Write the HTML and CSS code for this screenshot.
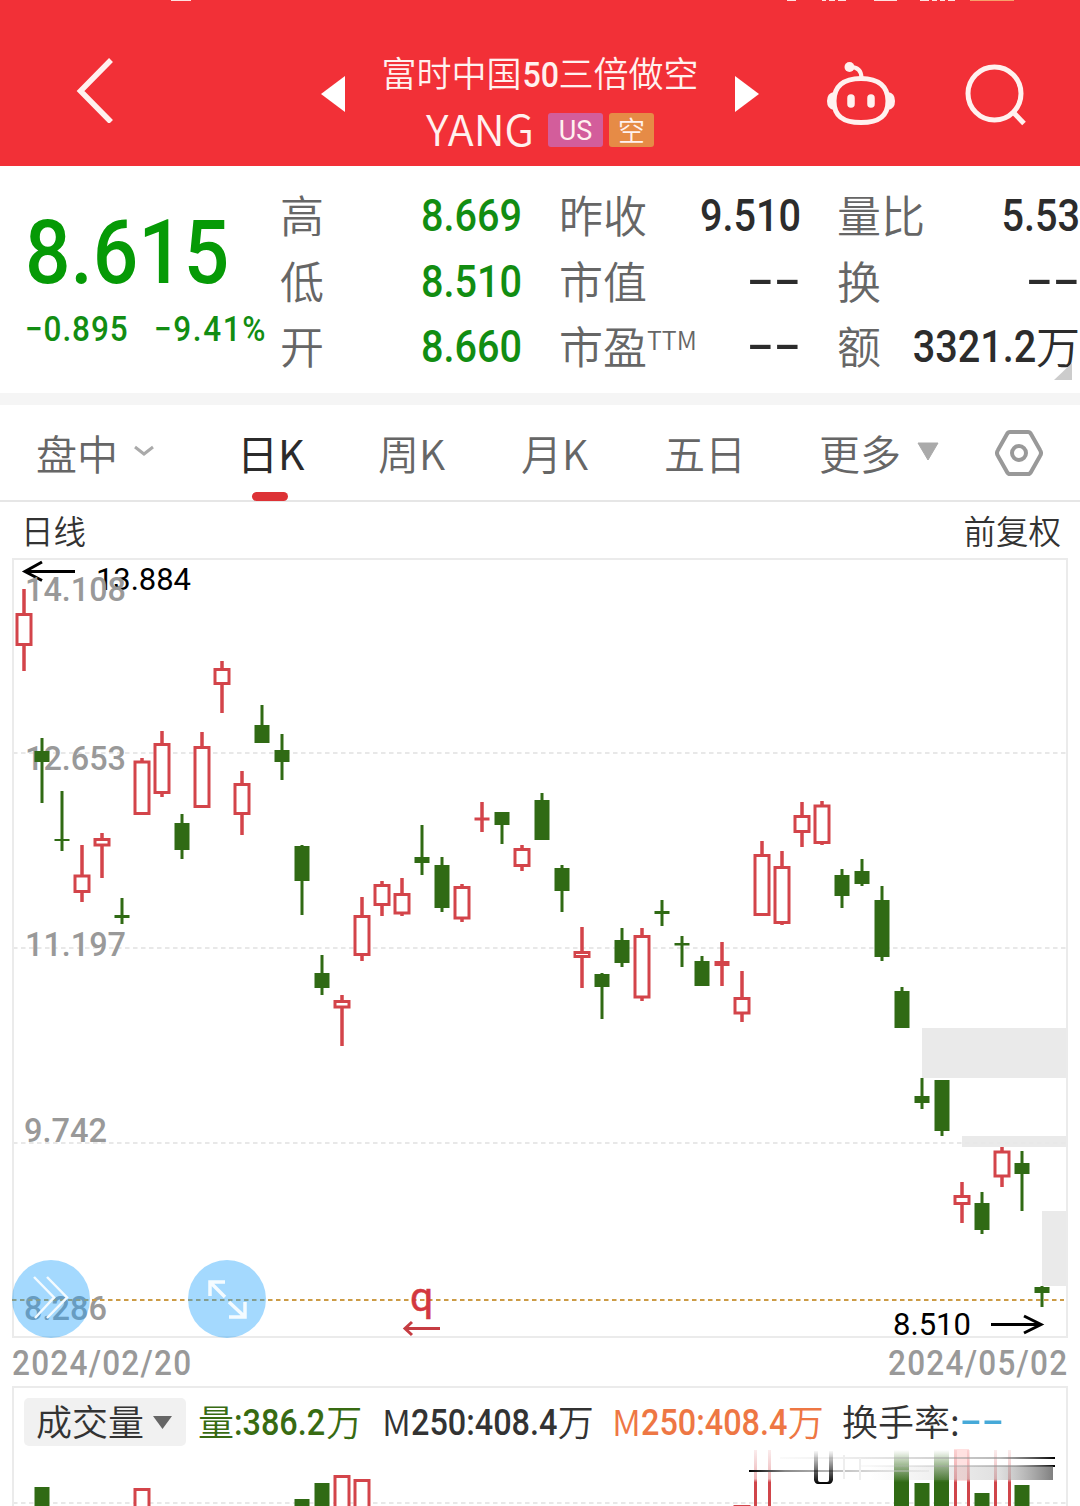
FILE: index.html
```html
<!DOCTYPE html>
<html lang="zh-CN">
<head>
    <meta charset="UTF-8">
    <title>YANG 富时中国50三倍做空</title>
    <meta name="viewport" content="width=device-width, initial-scale=1.0">
    <link rel="stylesheet" href="styles.css">
</head>
<body>

    <header class="header">
        <svg class="status" width="1080" height="3" viewBox="0 0 1080 3">
            <path d="M171 0h20M787 0h9M822 0h4M829 0h6M838 0h8M874 0h23M920 0h9M932 0h5M940 0h5M948 0h7" stroke="#ffe0df" stroke-width="2"/>
            <path d="M970 0h44" stroke="#f7a06a" stroke-width="2"/>
        </svg>
        <div class="nav">
            <svg class="back" width="40" height="66" viewBox="0 0 40 66"><path d="M36 3L5.500 34L36 65" fill="none" stroke="#fff1ef" stroke-width="5.500"/></svg>
            <svg class="prev" width="24" height="36" viewBox="0 0 24 36"><path d="M0 18L24 0V36Z" fill="#fff"/></svg>
            <div class="title">
                <div class="stock-name">富时中国<span class="fifty">50</span>三倍做空</div>
                <div class="stock-code">YANG <span class="badge us">US</span><span class="badge short">空</span></div>
            </div>
            <svg class="next" width="24" height="36" viewBox="0 0 24 36"><path d="M24 18L0 0V36Z" fill="#fff"/></svg>
            <svg class="robot" width="70" height="66" viewBox="0 0 70 66" fill="none" stroke="#fff1ef">
                <path d="M35.500 18C35.500 10 31 7 24 7" stroke-width="4"/>
                <circle cx="23.500" cy="7" r="5" fill="#fff1ef" stroke="none"/>
                <path d="M35 18.500C53 18.500 62 27 62 41C62 56 53 62.500 35 62.500S8 56 8 41C8 27 17 18.500 35 18.500Z" stroke-width="5"/>
                <path d="M8 32Q1 33 1 41T8 50ZM62 32Q69 33 69 41T62 50Z" fill="#fff1ef" stroke="none"/>
                <path d="M25 38v6M45 38v6" stroke-width="7.500" stroke-linecap="round"/>
            </svg>
            <svg class="search" width="62" height="62" viewBox="0 0 62 62" fill="none" stroke="#fff1ef" stroke-width="5"><circle cx="29.500" cy="29.500" r="26.500"/><path d="M48 48L59 59.500"/></svg>
        </div>
    </header>

    <section class="quote">
        <div class="last">
            <div class="price num">8.615</div>
            <div class="change"><span class="num">−0.895</span><span class="num percent">−9.41%</span></div>
        </div>
        <div class="stats">
            <span>高</span><b class="num down">8.669</b>
            <span>昨收</span><b class="num">9.510</b>
            <span>量比</span><b class="num">5.53</b>
            <span>低</span><b class="num down">8.510</b>
            <span>市值</span><b class="dash">--</b>
            <span>换</span><b class="dash">--</b>
            <span>开</span><b class="num down">8.660</b>
            <span>市盈<sup>TTM</sup></span><b class="dash">--</b>
            <span>额</span><b class="amount"><i class="num">3321.2</i>万</b>
        </div>
        <svg class="corner" width="18" height="17"><path d="M18 0V17H0Z" fill="#ccc"/></svg>
    </section>

    <nav class="tabs">
        <div>盘中<svg class="caret" width="20" height="12" viewBox="0 0 20 12"><path d="M1 2L10 9L19 2" fill="none" stroke="#aaa" stroke-width="3"/></svg></div>
        <div class="active">日K</div>
        <div>周K</div>
        <div>月K</div>
        <div>五日</div>
        <div>更多<svg class="more" width="22" height="19" viewBox="0 0 22 19"><path d="M1 1H21L11 18Z" fill="#aaa" stroke="#aaa" stroke-linejoin="round"/></svg></div>
        <svg class="gear" width="48" height="46" viewBox="0 0 48 46" fill="none" stroke="#999" stroke-width="4">
            <path d="M15 2H33Q35 2 36 4L45 20Q47 23 45 26L36 42Q35 44 33 44H15Q13 44 12 42L3 26Q1 23 3 20L12 4Q13 2 15 2Z"/>
            <circle cx="24" cy="23" r="7"/>
        </svg>
    </nav>

    <div class="chart-head"><span>日线</span><span>前复权</span></div>

    <svg class="chart" id="kline" width="1080" height="780" viewBox="0 558 1080 780">
        <path class="gap" d="M922 1028H1068V1078H922ZM962 1136H1068V1147H962ZM1042 1211H1068V1286H1042Z"/>
        <path class="grid" d="M13 753H1067M13 948H1067M13 1143H1067"/>
        <rect class="frame" x="13" y="559" width="1054" height="778"/>
        <text class="mark" x="96" y="590" textLength="95">13.884</text>
        <path class="arrow" d="M75 571.500H25M42 562L25 571.500L42 580.500"/>
        <g class="axis">
            <text x="25" y="601" textLength="101" lengthAdjust="spacingAndGlyphs">14.108</text>
            <text x="25" y="770" textLength="101" lengthAdjust="spacingAndGlyphs">12.653</text>
            <text x="25" y="956" textLength="101" lengthAdjust="spacingAndGlyphs">11.197</text>
            <text x="24" y="1142" textLength="83" lengthAdjust="spacingAndGlyphs">9.742</text>
            <text x="24" y="1320" textLength="83" lengthAdjust="spacingAndGlyphs">8.286</text>
        </g>
        <path class="current" d="M12 1300H1064"/>
        <g id="candles"></g>
        <text class="mark" x="893" y="1335" textLength="78">8.510</text>
        <path class="arrow" d="M991 1324.500H1041M1024 1316L1041 1324.500L1024 1333"/>
        <text class="q" x="410" y="1311">q</text>
        <path class="q-arrow" d="M440 1328.500H405M412 1322L405 1328.500L412 1335"/>
        <g class="fab">
            <circle cx="51" cy="1299" r="39"/>
            <circle cx="227" cy="1299" r="39"/>
            <path d="M34 1277L54 1297.500L35 1318M47 1277L67 1297.500L47 1318" stroke-width="2.500"/>
            <path d="M225 1282H210V1296M210 1282L225 1297M229 1317H245V1302M245 1317L229 1302" stroke-width="3.500"/>
        </g>
    </svg>

    <div class="dates"><span class="num">2024/02/20</span><span class="num">2024/05/02</span></div>

    <section class="volume">
        <div class="indicators">
            <div class="pill"><span>成交量</span><svg width="19" height="13"><path d="M0 0H19L9.500 13Z" fill="#666"/></svg></div>
            <div class="vol">量<span class="num">:386.2</span>万</div>
            <div class="ma">M<span class="num">250:408.4</span>万</div>
            <div class="ma orange">M<span class="num">250:408.4</span>万</div>
            <div class="turnover">换手率:<span class="dash">--</span></div>
        </div>
        <svg class="bars" width="1054" height="58" viewBox="14 1448 1054 58">
            <defs>
                <linearGradient id="fadeGreen" x2="0" y2="1"><stop offset="0" stop-color="#306a14" stop-opacity="0"/><stop offset=".58" stop-color="#306a14"/></linearGradient>
                <linearGradient id="fadeRed" gradientUnits="userSpaceOnUse" x1="0" y1="1450" x2="0" y2="1486"><stop offset="0" stop-color="#d0454a" stop-opacity=".1"/><stop offset=".8" stop-color="#d0454a" stop-opacity=".4"/><stop offset=".9" stop-color="#d0454a"/></linearGradient>
                <linearGradient id="lineLeft"><stop offset="0" stop-color="#000"/><stop offset=".2" stop-color="#888"/><stop offset="1" stop-color="#ddd" stop-opacity=".3"/></linearGradient>
                <linearGradient id="lineRight"><stop offset="0" stop-color="#ccc" stop-opacity=".1"/><stop offset=".8" stop-color="#888" stop-opacity=".6"/><stop offset="1" stop-color="#000"/></linearGradient>
                <linearGradient id="blurBlock"><stop offset="0" stop-color="#999" stop-opacity="0"/><stop offset=".7" stop-color="#999" stop-opacity=".3"/><stop offset="1" stop-color="#555" stop-opacity=".75"/></linearGradient>
                <linearGradient id="fadeBlack" gradientUnits="userSpaceOnUse" x1="0" y1="1450" x2="0" y2="1484"><stop offset="0" stop-opacity="0"/><stop offset=".5" stop-opacity=".5"/><stop offset="1"/></linearGradient>
            </defs>
            <path class="grid" d="M13 1503H1067"/>
            <g id="volumes"></g>
            <rect x="894" y="1450" width="15" height="56" fill="url(#fadeGreen)"/>
            <rect x="934" y="1450" width="15" height="56" fill="url(#fadeGreen)"/>
            <rect x="954" y="1449" width="15" height="32" fill="#f33" opacity=".15"/>
            <path d="M754 1450h3v56h-3zM768 1450h3v56h-3zM954 1450h3v56h-3zM967 1450h3v56h-3zM994 1450h3v56h-3zM1008 1450h3v56h-3z" fill="url(#fadeRed)"/>
            <rect x="749" y="1470" width="180" height="2" fill="url(#lineLeft)"/>
            <rect x="780" y="1457" width="275" height="2" fill="url(#lineRight)"/>
            <rect x="860" y="1465" width="195" height="2" fill="url(#lineRight)"/>
            <rect x="870" y="1466" width="183" height="14" fill="url(#blurBlock)"/>
            <path d="M814 1451h4v29q0 2 2 2h7q2 0 2-2v-29h4v29q-1 4-4 4h-11q-3 0-4-4z" fill="url(#fadeBlack)"/>
            <path d="M844 1455v24M860 1458v22" stroke="#eee" stroke-width="2"/>
        </svg>
    </section>

    <script>
        const RED = "#d3444a";
        const GREEN = "#306a14";

        // x, high, body top, body bottom, low, up
        const candles = [
            [24, 589, 613, 646, 671, 1], [42, 738, 751, 762, 803, 0], [62, 791, 839, 841, 851, 0],
            [82, 845, 874.5, 893, 902, 1], [102, 833, 838, 846.5, 878, 1], [122, 898, 915, 918, 924, 0],
            [142, 758, 760.5, 815, 815, 1], [162, 731, 743, 794, 797, 1], [182, 814, 823, 850, 859, 0],
            [202, 732, 746, 808, 808, 1], [222, 661, 668, 685, 713, 1], [242, 771, 783, 815, 835, 1],
            [262, 705, 725, 743, 743, 0], [282, 734, 750, 762, 780, 0], [302, 845, 846, 881, 915, 0],
            [322, 955, 973, 988, 995, 0], [342, 995, 1000, 1008.5, 1046, 1], [362, 897, 915, 956, 961, 1],
            [382, 881, 884, 906, 916, 1], [402, 878, 893, 914.5, 916, 1], [422, 825, 857, 863, 875, 0],
            [442, 857, 865, 908, 912, 0], [462, 884, 886, 919.5, 922, 1], [482, 802, 817.5, 820.5, 832, 1],
            [502, 812, 812, 825, 844, 0], [522, 845, 848, 867, 871, 1], [542, 793, 800, 840, 840, 0],
            [562, 865, 868, 891, 912, 0], [582, 927, 951, 958, 988, 1], [602, 973, 974, 987, 1019, 0],
            [622, 928, 940, 963, 967, 0], [642, 928, 935, 998.5, 1001, 1], [662, 900, 911, 914, 926, 0],
            [682, 936, 943, 945.5, 967, 0], [702, 956, 961, 986, 986, 0], [722, 942, 961, 966, 986, 1],
            [742, 971, 997, 1014.5, 1022, 1], [762, 841, 854, 916, 916, 1], [782, 851, 866, 924, 925, 1],
            [802, 802, 815, 833, 847, 1], [822, 801, 804.5, 844, 845, 1], [842, 869, 875, 896, 908, 0],
            [862, 859, 871, 884, 886, 0], [882, 886, 900, 957, 961, 0], [902, 987, 991, 1028, 1028, 0],
            [922, 1078, 1096, 1103, 1109, 0], [942, 1080, 1080, 1131, 1136, 0], [962, 1182, 1195, 1205, 1223, 1],
            [982, 1192, 1203, 1230, 1234, 0], [1002, 1147, 1150.5, 1177.5, 1187, 1], [1022, 1151, 1163, 1174, 1211, 0],
            [1042, 1286, 1287, 1293, 1307, 0]
        ];

        // x, top, up
        const volumes = [
            [42, 1487, 0], [142, 1488, 1], [302, 1499, 0], [322, 1483, 0], [342, 1475, 1], [362, 1479, 1],
            [742, 1505, 1], [922, 1483, 0], [982, 1493, 0], [1022, 1485, 0]
        ];

        function rect(x, y, w, h, fill, stroke) {
            return `<rect x="${x}" y="${y}" width="${w}" height="${h}" fill="${fill}" stroke="${stroke || 'none'}" stroke-width="3"/>`;
        }

        document.getElementById("candles").innerHTML = candles.map(([x, high, top, bottom, low, up]) => {
            const color = up ? RED : GREEN;
            const w = up ? 3.5 : 3;
            const wick = rect(x - w / 2, high, w, low - high, color);
            if (up && bottom - top > 6) {
                return wick + rect(x - 7, top + 1.5, 14, bottom - top - 3, "#fff", color);
            }
            return wick + rect(x - 7.5, top, 15, bottom - top, color);
        }).join("");

        document.getElementById("volumes").innerHTML = volumes.map(([x, top, up]) =>
            up ? rect(x - 7, top + 1.5, 14, 40, "#fff", RED) : rect(x - 7.5, top, 15, 40, GREEN)
        ).join("");
    </script>
</body>
</html>
```
FILE: styles.css
```css
* {
    box-sizing: border-box;
}
body {
    margin: 0;
    width: 1080px;
    height: 1506px;
    overflow: hidden;
    background: #fff;
    color: #333;
    font-family: "Noto Sans CJK SC", sans-serif;
    font-weight: 350;
}
svg {
    display: block;
    flex: none;
}
.num {
    display: inline-block;
    font-family: Roboto, "Noto Sans CJK SC", sans-serif;
    font-style: normal;
    font-weight: 500;
    transform: scaleX(0.9);
    transform-origin: left;
    white-space: nowrap;
}
.dash {
    display: inline-block;
    font-family: Roboto, sans-serif;
    font-weight: 500;
    transform: scaleX(1.8);
    transform-origin: right;
}

/* header */
.header {
    height: 166px;
    background: #f23037;
    color: #fff1ef;
}
.nav {
    display: flex;
    align-items: flex-start;
}
.back {
    margin: 54px 0 0 75px;
}
.prev {
    margin: 73px 0 0 206px;
}
.title {
    width: 390px;
    padding-top: 41px;
    text-align: center;
}
.stock-name {
    height: 56px;
    font-size: 35px;
    line-height: 56px;
    white-space: nowrap;
}
.fifty {
    display: inline-block;
    width: 37px;
    font-family: Roboto, sans-serif;
    font-weight: 500;
    transform: scaleX(0.92) translateX(-1px);
}
.stock-code {
    display: flex;
    justify-content: center;
    align-items: center;
    height: 54px;
    font-size: 43px;
    line-height: 54px;
}
.badge {
    height: 34px;
    margin: 6px 0 0 6px;
    border-radius: 3px;
    font-size: 27px;
    line-height: 33px;
    text-align: center;
}
.badge.us {
    width: 55px;
    margin-left: 14px;
    background: #d35d9b;
    font-family: Roboto, sans-serif;
    font-weight: 400;
    line-height: 36px;
}
.badge.short {
    width: 45px;
    background: #e68b46;
}
.next {
    margin-top: 73px;
}
.robot {
    margin: 57px 0 0 67px;
}
.search {
    margin: 61px 0 0 69px;
}

/* quote */
.quote {
    position: relative;
    display: flex;
    height: 239px;
    border-bottom: 12px solid #f5f5f5;
}
.last {
    width: 280px;
    padding: 31px 0 0 25px;
    color: #069a06;
}
.price {
    height: 110px;
    font-size: 89px;
    line-height: 112px;
}
.change {
    display: flex;
    gap: 14px;
    font-size: 35px;
    line-height: 46px;
    letter-spacing: 1px;
    color: #128d12;
}
.percent {
    letter-spacing: 1.800px;
}
.stats {
    display: grid;
    grid-template-columns: 100px 142px 37px 100px 142px 36px 70px 173px;
    grid-template-rows: repeat(3, 65.5px);
    width: 800px;
    padding-top: 17px;
    font-size: 44px;
    line-height: 62px;
    color: #666;
}
.stats > span {
    white-space: nowrap;
}
.stats > :nth-child(6n+3) {
    grid-column: 4;
}
.stats > :nth-child(6n+5) {
    grid-column: 7;
}
.stats b {
    color: #2c2c2c;
    text-align: right;
    transform-origin: right;
}
.stats .num {
    line-height: 67px;
}
.stats b.down {
    color: #128d12;
}
.stats .dash {
    justify-self: end;
}
.stats .amount {
    display: flex;
    justify-content: flex-end;
    font-weight: 350;
}
.amount .num {
    transform-origin: right;
}
.stats sup {
    font-size: 25px;
    line-height: 0;
    vertical-align: 14px;
}
.corner {
    position: absolute;
    right: 8px;
    bottom: 13px;
}

/* period tabs */
.tabs {
    display: grid;
    grid-template-columns: 201px 141px 143px 143px 155px 176px 48px;
    align-items: center;
    height: 97px;
    padding-left: 36px;
    border-bottom: 2px solid #e6e6e6;
    font-size: 41px;
    color: #666;
}
.tabs div {
    display: flex;
    align-items: center;
    height: 96px;
    padding-bottom: 2px;
}
.tabs .active {
    position: relative;
    color: #2b2b2b;
    font-weight: 400;
}
.active::after {
    content: "";
    position: absolute;
    left: 15px;
    bottom: 0;
    width: 36px;
    height: 9px;
    border-radius: 5px;
    background: #dd3236;
}
.caret {
    margin: -2px 0 0 16px;
}
.more {
    margin: -1px 0 0 16px;
}

/* k-line */
.chart-head {
    display: flex;
    justify-content: space-between;
    height: 56px;
    padding: 0 19px 0 21px;
    font-size: 32.500px;
    line-height: 56px;
}
.grid {
    stroke: #e8e8e8;
    stroke-width: 2;
    stroke-dasharray: 4.500 3.500;
}
.gap {
    fill: #eaeaea;
}
.frame {
    fill: none;
    stroke: #ebebeb;
    stroke-width: 2;
}
.axis {
    font: 500 34px Roboto, sans-serif;
    fill: #999;
}
.mark {
    font: 400 31px Roboto, sans-serif;
    fill: #000;
}
.arrow {
    fill: none;
    stroke: #000;
    stroke-width: 3;
}
.current {
    stroke: #cc9b45;
    stroke-width: 2;
    stroke-dasharray: 4.500 3.500;
}
.q {
    font: 400 41px Roboto, sans-serif;
    fill: #d3383f;
    stroke: #d3383f;
    stroke-width: 0.5;
}
.q-arrow {
    fill: none;
    stroke: #c53c42;
    stroke-width: 3;
}
.fab circle {
    fill: #1b9ffc;
    opacity: 0.4;
}
.fab path {
    fill: none;
    stroke: #f4fbff;
}
.dates {
    display: flex;
    justify-content: space-between;
    height: 48px;
    padding: 0 12px;
    font-size: 35px;
    line-height: 51px;
    letter-spacing: 1.400px;
    color: #999;
}
.dates .num:last-child {
    transform-origin: right;
}

/* volume */
.volume {
    width: 1056px;
    height: 120px;
    margin-left: 12px;
    border: 2px solid #ebebeb;
    border-bottom: none;
}
.indicators {
    display: flex;
    height: 60px;
    padding: 10px 0 0 10px;
    font-size: 36px;
    line-height: 45px;
    white-space: nowrap;
}
.pill {
    display: flex;
    align-items: center;
    gap: 9px;
    width: 162px;
    height: 48px;
    padding-left: 12px;
    border-radius: 5px;
    background: #f1f1f1;
}
.pill span {
    padding-bottom: 3px;
}
.vol {
    width: 184px;
    margin-left: 12px;
    color: #386b12;
}
.ma {
    width: 230px;
}
.orange {
    color: #ee7744;
}
.indicators .num {
    margin-right: -9px;
    transform: translateY(-1.500px) scaleX(0.9);
}
.ma .num {
    margin-right: -16px;
}
.turnover .dash {
    color: #46a9d8;
    transform: translateY(-2px) scaleX(1.8);
    transform-origin: left;
}
```
